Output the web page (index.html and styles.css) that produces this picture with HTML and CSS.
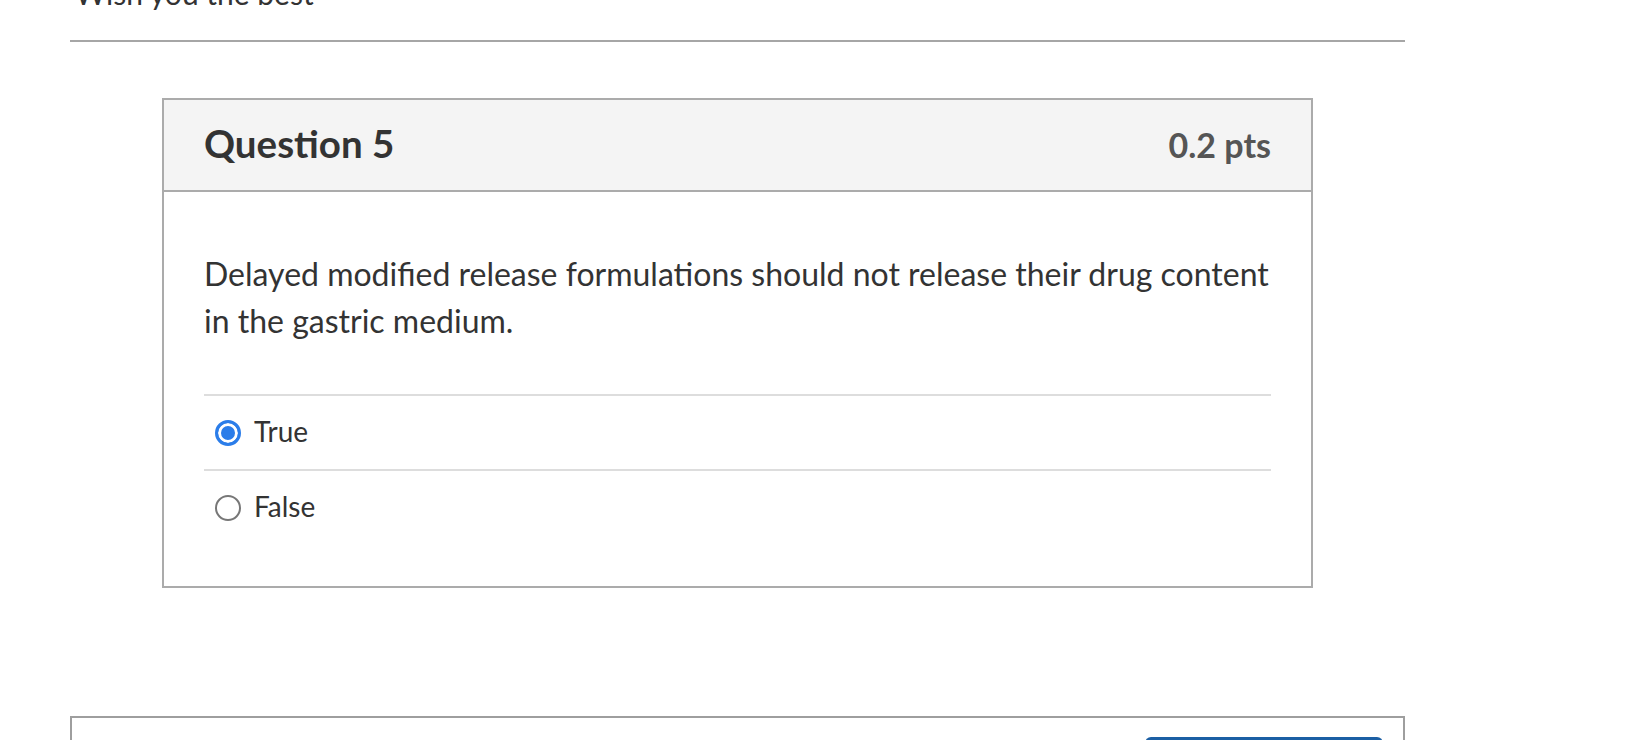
FILE: index.html
```html
<!DOCTYPE html>
<html lang="en">
<head>
<meta charset="utf-8">
<title>Quiz</title>
<link rel="stylesheet" href="styles.css">
</head>
<body>
<div class="page">
  <p class="intro">Wish you the best</p>
  <hr class="rule">
  <div class="question">
    <div class="q-header">
      <h2 class="q-name">Question 5</h2>
      <span class="q-pts">0.2 pts</span>
    </div>
    <div class="q-body">
      <p class="q-text">Delayed modified release formulations should not release their drug content in the gastric medium.</p>
      <div class="answers">
        <label class="answer">
          <span class="radio checked"></span>
          <span class="answer-label">True</span>
        </label>
        <label class="answer">
          <span class="radio"></span>
          <span class="answer-label">False</span>
        </label>
      </div>
    </div>
  </div>
  <div class="footer-card">
    <button class="submit" type="button"></button>
  </div>
</div>
</body>
</html>
```
FILE: styles.css
```css
html, body {
  margin: 0;
  padding: 0;
  background: #ffffff;
  overflow: hidden;
}
body {
  font-family: Lato, "Open Sans", "Liberation Sans", sans-serif;
  color: #333333;
}
.page {
  margin-left: 70px;
  width: 1335px;
}
.intro {
  margin: -29px 0 0 5px;
  font-size: 30px;
  line-height: 45px;
  color: #333333;
}
.rule {
  margin: 0;
  margin-top: 24px;
  border: 0;
  height: 2px;
  background: #a6a6a6;
}
.question {
  margin: 56px 0 0 92px;
  width: 1147px;
  border: 2px solid #ababab;
}
.q-header {
  display: flex;
  justify-content: space-between;
  align-items: baseline;
  background: #f4f4f4;
  border-bottom: 2px solid #ababab;
  padding: 0 40px;
  height: 90px;
}
.q-name {
  margin: 0;
  font-size: 38.5px;
  font-weight: 700;
  line-height: 86px;
  color: #333333;
}
.q-pts {
  font-size: 34px;
  font-weight: 700;
  color: #555555;
}
.q-body {
  padding: 58px 40px 42px 40px;
}
.q-text {
  margin: 0;
  font-size: 32px;
  line-height: 47px;
}
.answers {
  margin-top: 50px;
}
.answer {
  display: flex;
  align-items: center;
  height: 73px;
  border-top: 2px solid #dddddd;
  padding-left: 11px;
  gap: 13px;
}
.radio {
  box-sizing: border-box;
  width: 26px;
  height: 26px;
  border-radius: 50%;
  border: 2px solid #777777;
  background: #ffffff;
  flex: none;
}
.radio.checked {
  border: 3px solid #2b7de9;
  background: #2b7de9;
  box-shadow: inset 0 0 0 3px #ffffff;
}
.answer-label {
  font-size: 28px;
  line-height: 34px;
  padding-bottom: 4px;
  color: #333333;
}
.footer-card {
  margin-top: 128px;
  border: 2px solid #9e9e9e;
  height: 200px;
  display: flex;
  justify-content: flex-end;
  padding: 19px 20px 0 0;
}
.submit {
  width: 238px;
  height: 50px;
  background: #1b5fa4;
  border: 0;
  border-radius: 6px;
}
```
